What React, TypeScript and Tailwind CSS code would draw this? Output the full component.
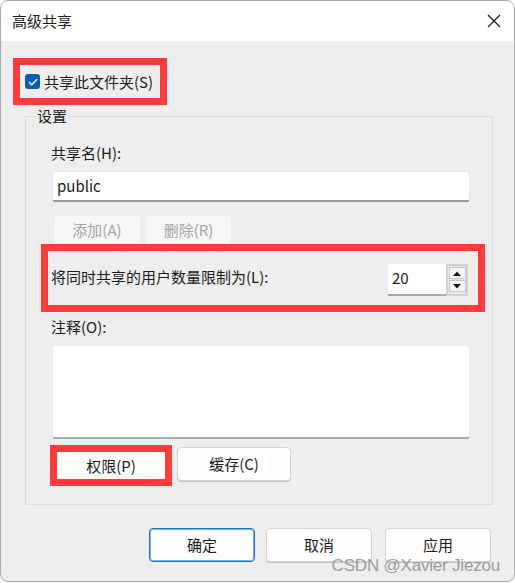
import { ReactNode } from 'react';

const cjk = { fontFamily: '"Noto Sans CJK SC", "Noto Sans", sans-serif' };

type BtnProps = {
  children: ReactNode;
  className?: string;
  disabled?: boolean;
  primary?: boolean;
};

const Button = ({ children, className = '', disabled, primary }: BtnProps) => (
  <div
    className={`flex items-center justify-center rounded-[4px] border text-[15px] leading-[20px] ${
      disabled
        ? 'border-[#ececec] bg-[#f7f7f7] text-[#a3a3a3]'
        : primary
          ? 'border-[#1f6fc9] bg-[#fdfdfd] text-[#1b1b1b] shadow-[inset_0_0_0_1px_#7fb0e6]'
          : 'border-[#d3d3d3] bg-[#fdfdfd] text-[#1b1b1b] shadow-[0_1px_0_#c4c4c4]'
    } ${className}`}
  >
    {children}
  </div>
);

const SpinArrow = ({ up }: { up?: boolean }) => (
  <div className="flex h-[12px] w-[17px] items-center justify-center border border-[#c9c9c9] bg-[#f4f4f4]">
    <svg width="8" height="5" viewBox="0 0 8 5">
      <path d={up ? 'M0 5 L4 0.5 L8 5 Z' : 'M0 0 L4 4.5 L8 0 Z'} fill="#1b1b1b" />
    </svg>
  </div>
);

const App = () => {
  return (
    <div className="h-[583px] w-[515px] bg-white" style={cjk}>
      <div className="relative flex h-[582px] w-[515px] flex-col overflow-hidden rounded-[8px] border border-[#a9a9a9] bg-[#eeeeee] text-[#1b1b1b]">
        {/* title bar */}
        <div className="flex h-[40px] shrink-0 items-center justify-between bg-white pl-[11px] pr-[13px]">
          <span className="text-[15px] leading-[20px]">高级共享</span>
          <svg width="14" height="14" viewBox="0 0 14 14">
            <path d="M1 1 L13 13 M13 1 L1 13" stroke="#1b1b1b" strokeWidth="1.2" />
          </svg>
        </div>

        {/* body */}
        <div className="flex flex-col pt-[17px]">
          <div className="ml-[12px] flex h-[47px] w-[154px] items-center border-[7px] border-[#fd3b3b] pl-[5px]">
            <div className="flex h-[15px] w-[15px] items-center justify-center rounded-[3px] bg-[#0a5fb4]">
              <svg width="10" height="8" viewBox="0 0 10 8">
                <path d="M1 4 L3.8 6.8 L9 1.2" stroke="white" strokeWidth="1.3" fill="none" />
              </svg>
            </div>
            <span className="ml-[4px] text-[15px] leading-[20px]">共享此文件夹(S)</span>
          </div>

          {/* group box */}
          <div className="relative ml-[24px] mt-[11px] flex h-[389px] w-[468px] flex-col border border-[#dcdcdc]">
            <span className="absolute -top-[11px] left-[10px] bg-[#eeeeee] px-[1px] text-[15px] leading-[20px]">
              设置
            </span>

            <span className="ml-[25px] mt-[26px] text-[15px] leading-[20px]">共享名(H):</span>
            <div className="ml-[26px] mt-[8px] flex h-[31px] w-[418px] items-center rounded-[3px] border border-[#e7e7e7] border-b-2 border-b-[#9c9c9c] bg-white pl-[4px] text-[15px]">
              public
            </div>

            <div className="ml-[27px] mt-[13px] flex gap-[4px]">
              <Button disabled className="h-[30px] w-[88px]">
                添加(A)
              </Button>
              <Button disabled className="h-[30px] w-[87px]">
                删除(R)
              </Button>
            </div>

            <div className="-mt-[1px] ml-[15px] flex h-[68px] w-[444px] items-center border-[7px] border-[#fd3b3b] pl-[3px] pr-[10px]">
              <span className="mt-[-3px] text-[15px] leading-[20px]">将同时共享的用户数量限制为(L):</span>
              <div className="ml-auto mt-[3px] flex h-[32px]">
                <div className="flex w-[58px] items-center border-b-2 border-b-[#a8a8a8] bg-white pl-[4px] text-[15px]">
                  20
                </div>
                <div className="flex w-[22px] flex-col items-center justify-center gap-[1px] border-2 border-[#d2d2d2] bg-[#e8e8e8]">
                  <SpinArrow up />
                  <SpinArrow />
                </div>
              </div>
            </div>

            <span className="ml-[25px] mt-[5px] text-[15px] leading-[20px]">注释(O):</span>
            <div className="ml-[26px] mt-[8px] h-[94px] w-[418px] rounded-[3px] border border-[#ececec] border-b-2 border-b-[#a8a8a8] bg-white" />

            <div className="ml-[24px] mt-[6px] flex items-start">
              <div className="flex h-[41px] w-[122px] items-center justify-center border-[7px] border-[#fd3b3b] bg-[#fdfdfd] text-[15px] leading-[20px]">
                权限(P)
              </div>
              <Button className="ml-[5px] mt-[2px] h-[34px] w-[114px]">缓存(C)</Button>
            </div>
          </div>

          {/* bottom buttons */}
          <div className="ml-[148px] mt-[23px] flex">
            <Button primary className="h-[34px] w-[106px]">
              确定
            </Button>
            <Button className="ml-[11px] h-[34px] w-[106px]">取消</Button>
            <Button className="ml-[13px] h-[34px] w-[106px]">应用</Button>
          </div>
        </div>

        <span
          className="absolute bottom-[4px] right-[14px] text-[17px] leading-[22px] tracking-[-0.2px] text-[#9b9b9b]"
          style={{ fontFamily: '"Liberation Sans", Arial, sans-serif' }}
        >
          CSDN @Xavier Jiezou
        </span>
      </div>
    </div>
  );
};

export default App;
